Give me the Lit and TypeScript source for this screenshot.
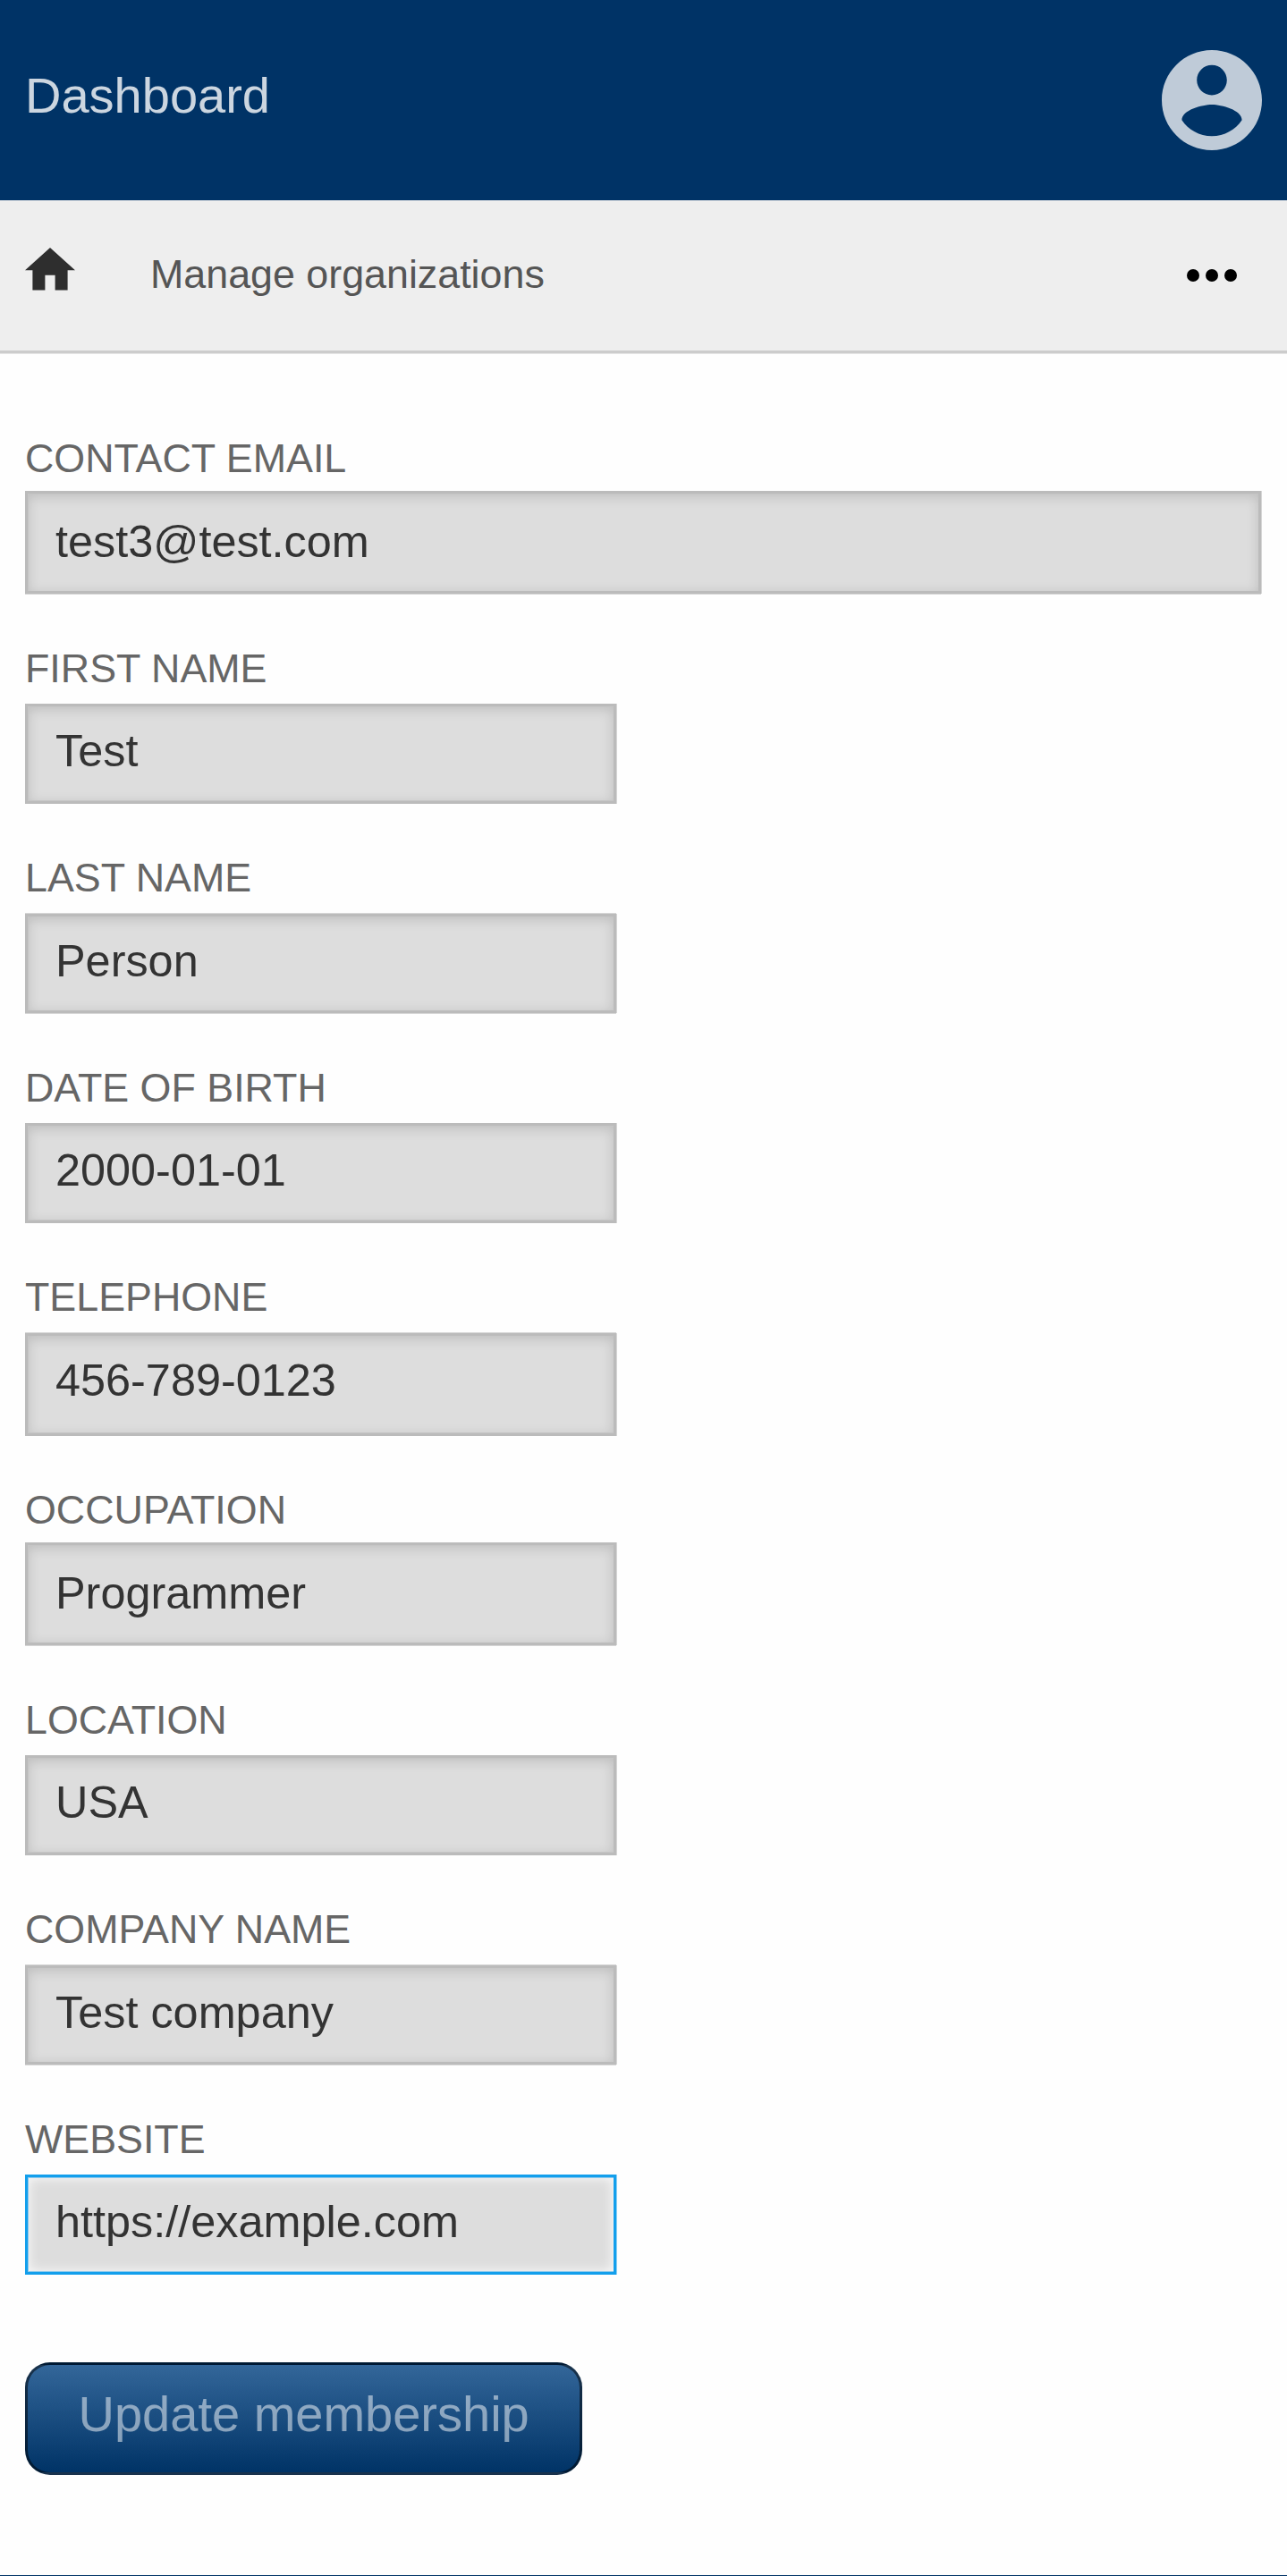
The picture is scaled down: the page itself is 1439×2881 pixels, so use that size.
import { LitElement, html, css } from "lit";
import { customElement, property } from "lit/decorators.js";
import { classMap } from "lit/directives/class-map.js";

interface Field {
  label: string;
  value: string;
  wide?: boolean;
  low?: boolean;
  tall?: boolean;
  active?: boolean;
  softTop?: boolean;
  softBottom?: boolean;
}

const FIELDS: Field[] = [
  { label: "CONTACT EMAIL", value: "test3@test.com", wide: true, low: true, tall: true, softBottom: true },
  { label: "FIRST NAME", value: "Test" },
  { label: "LAST NAME", value: "Person", softTop: true, softBottom: true },
  { label: "DATE OF BIRTH", value: "2000-01-01" },
  { label: "TELEPHONE", value: "456-789-0123", tall: true, softTop: true },
  { label: "OCCUPATION", value: "Programmer", low: true, tall: true, softBottom: true },
  { label: "LOCATION", value: "USA" },
  { label: "COMPANY NAME", value: "Test company", softTop: true, softBottom: true },
  { label: "WEBSITE", value: "https://example.com", active: true },
];

@customElement("form-field")
export class FormField extends LitElement {
  @property({ attribute: false }) field!: Field;

  static styles = css`
    :host {
      display: block;
    }
    .label {
      height: 73px;
      line-height: 67px;
      font-size: 44.8px;
      color: #666;
      white-space: nowrap;
    }
    .label.low {
      height: 70px;
    }
    .label.softTop {
      height: 74px;
    }
    .box {
      --outer: #d6d6d6;
      --inner: #c5c5c5;
      --glow: inset 0 3px 14px rgba(0, 0, 0, 0.15);
      --top: inset 0 1px 0 var(--inner);
      --bottom: inset 0 -1px 0 var(--inner);
      box-sizing: border-box;
      width: 661px;
      height: 112px;
      padding-left: 31px;
      border: 3px solid #bbb;
      background: #ddd;
      box-shadow: inset 1px 0 0 var(--inner), var(--top), var(--bottom), 1px 0 0 var(--outer), var(--glow);
      font-size: 50.4px;
      line-height: 99px;
      color: #333;
      white-space: nowrap;
    }
    .box.softTop {
      --top: 0 -1px 0 var(--outer);
    }
    .box.softBottom {
      --bottom: 0 1px 0 var(--outer);
      height: 111px;
      margin-bottom: 1px;
    }
    .box.tall {
      height: 115px;
    }
    .box.low {
      line-height: 108px;
    }
    .box.wide {
      width: auto;
      margin-right: 1px;
    }
    .box.active {
      --outer: #8dd0f5;
      --inner: #8cc9ec;
      --glow: inset 0 0 14px #fefefe;
      border-color: #139fec;
    }
  `;

  render() {
    const { label, value, wide, low, tall, active, softTop, softBottom } = this.field;
    const box = {
      box: true,
      wide: !!wide,
      low: !!low,
      tall: !!tall,
      active: !!active,
      softTop: !!softTop,
      softBottom: !!softBottom,
    };
    return html`
      <div class=${classMap({ label: true, low: !!low, softTop: !!softTop })}>${label}</div>
      <div class=${classMap(box)}>${value}</div>
    `;
  }
}

@customElement("app-root")
export class AppRoot extends LitElement {
  static styles = css`
    :host {
      display: flex;
      flex-direction: column;
      box-sizing: border-box;
      height: 2881px;
      overflow: hidden;
      background: #fefefe;
      border-bottom: 1px solid #036;
      font-family: "Liberation Sans", Arial, sans-serif;
    }
    .header {
      display: flex;
      flex: none;
      justify-content: space-between;
      align-items: center;
      box-sizing: border-box;
      height: 224px;
      padding: 0 28px;
      background: #036;
    }
    .title {
      padding-bottom: 10px;
      font-size: 56px;
      line-height: 64px;
      color: rgba(255, 255, 255, 0.8);
    }
    .avatar {
      display: block;
      width: 112px;
      height: 112px;
      fill: rgba(255, 255, 255, 0.75);
    }
    .bar {
      display: flex;
      flex: none;
      align-items: center;
      box-sizing: border-box;
      height: 171px;
      padding: 0 56px 0 28px;
      border-bottom: 3px solid #ccc;
      background: #eee;
      box-shadow: 0 1px 0 #e5e5e5;
    }
    .home {
      display: block;
      width: 56px;
      height: 47.6px;
      margin-bottom: 14px;
      fill: #2e2e2e;
    }
    .crumb {
      flex: 1;
      margin-left: 84px;
      padding-bottom: 5px;
      font-size: 44.8px;
      line-height: 56px;
      color: #555;
    }
    .more {
      display: block;
      width: 56px;
      height: 14px;
      fill: #000;
    }
    .form {
      display: flex;
      flex-direction: column;
      align-items: stretch;
      gap: 49px;
      padding: 84px 28px 0;
    }
    .submit {
      align-self: flex-start;
      box-sizing: border-box;
      height: 126px;
      margin-top: 49px;
      padding: 0 56px 0 56.5px;
      border: 3px solid rgba(0, 0, 0, 0.5);
      border-radius: 28px;
      background: linear-gradient(#369, #036);
      font-family: inherit;
      font-size: 56px;
      line-height: 110px;
      color: rgba(255, 255, 255, 0.5);
      white-space: nowrap;
    }
  `;

  render() {
    return html`
      <header class="header">
        <div class="title">Dashboard</div>
        <svg class="avatar" viewBox="2 2 20 20">
          <path d="M12 2C6.48 2 2 6.48 2 12s4.48 10 10 10 10-4.48 10-10S17.52 2 12 2zm0 3c1.66 0 3 1.34 3 3s-1.34 3-3 3-3-1.34-3-3 1.34-3 3-3zm0 14.2c-2.5 0-4.71-1.28-6-3.22.03-1.99 4-3.08 6-3.08 1.99 0 5.97 1.09 6 3.08-1.29 1.94-3.5 3.22-6 3.22z"></path>
        </svg>
      </header>
      <nav class="bar">
        <svg class="home" viewBox="2 3 20 17">
          <path d="M10 20v-6h4v6h5v-8h3L12 3 2 12h3v8z"></path>
        </svg>
        <div class="crumb">Manage organizations</div>
        <svg class="more" viewBox="4 10 16 4">
          <circle cx="6" cy="12" r="2"></circle>
          <circle cx="12" cy="12" r="2"></circle>
          <circle cx="18" cy="12" r="2"></circle>
        </svg>
      </nav>
      <main class="form">
        ${FIELDS.map((field) => html`<form-field .field=${field}></form-field>`)}
        <div class="submit" role="button">Update membership</div>
      </main>
    `;
  }
}
